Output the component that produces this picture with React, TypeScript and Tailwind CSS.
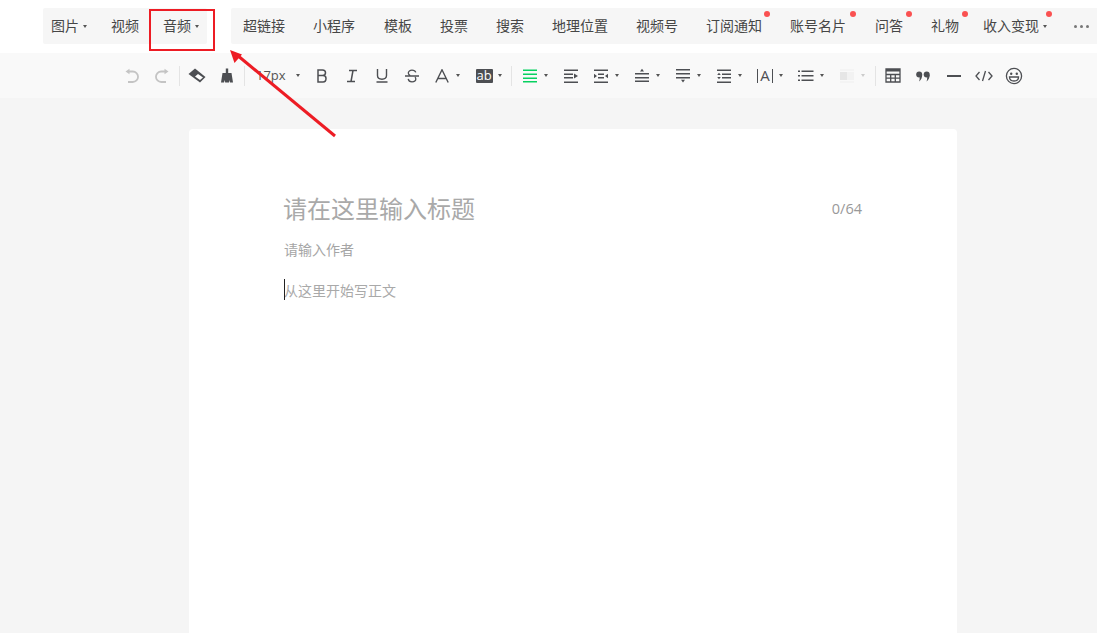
const menuFont = { fontFamily: '"Noto Sans CJK SC", "Liberation Sans", sans-serif' }

function Caret({ className = "border-t-[#555]" }: { className?: string }) {
  return <span className={`inline-block w-0 h-0 border-x-[2.5px] border-x-transparent border-t-[3px] ${className}`} />
}

function MenuItem({ label, caret, dot, className }: { label: string; caret?: boolean; dot?: string; className: string }) {
  return (
    <div className={`relative flex items-center shrink-0 text-[14px] leading-[36px] text-[#464646] ${className}`}>
      <span className="-mt-[2px]">{label}</span>
      {caret && <span className="ml-[4px] flex"><Caret /></span>}
      {dot && <span className={`absolute top-[3px] w-[6px] h-[6px] rounded-full bg-[#fa5151] ${dot}`} />}
    </div>
  )
}

function Tool({ children, caret, disabled, className = "" }: { children: React.ReactNode; caret?: boolean; disabled?: boolean; className?: string }) {
  return (
    <div className={`flex items-center shrink-0 ${caret ? "mr-[5px]" : ""} ${className}`}>
      <div className="w-[30px] h-[24px] flex items-center justify-center">{children}</div>
      {caret && (
        <div className="w-[10px] -ml-[4px] flex justify-center">
          <Caret className={disabled ? "border-t-[#ccc]" : "border-t-[#555]"} />
        </div>
      )}
    </div>
  )
}

function Sep({ className }: { className: string }) {
  return <div className={`w-px h-[20px] bg-[#e4e4e4] shrink-0 ${className}`} />
}

function Icon({ children, w = 18, h = 18 }: { children: React.ReactNode; w?: number; h?: number }) {
  return <svg width={w} height={h} viewBox={`0 0 ${w} ${h}`} fill="none">{children}</svg>
}

const dark = "#4d4f53"

function Lines({ ys, color = dark }: { ys: number[]; color?: string }) {
  return (
    <>
      {ys.map((y) => (
        <rect key={y} x="2" y={y} width="14" height="1.5" fill={color} />
      ))}
    </>
  )
}

export default function App() {
  return (
    <div className="relative w-[1097px] h-[633px] overflow-hidden bg-[#f5f5f5] flex flex-col" style={menuFont}>
      {/* 插入菜单 */}
      <div className="h-[53px] bg-white flex items-start pt-[8px] shrink-0">
        <div className="ml-[43px] h-[36px] w-[164px] bg-[#f6f6f6] rounded-[2px] flex pl-[8px]">
          <MenuItem label="图片" caret className="w-[60px]" />
          <MenuItem label="视频" className="w-[52px]" />
          <MenuItem label="音频" caret className="w-[43px]" />
        </div>
        <div className="ml-[24px] h-[36px] flex-1 bg-[#f6f6f6] rounded-l-[2px] flex pl-[12px] relative">
          <MenuItem label="超链接" className="mr-[28px]" />
          <MenuItem label="小程序" className="mr-[29px]" />
          <MenuItem label="模板" className="mr-[28px]" />
          <MenuItem label="投票" className="mr-[28px]" />
          <MenuItem label="搜索" className="mr-[28px]" />
          <MenuItem label="地理位置" className="mr-[28px]" />
          <MenuItem label="视频号" className="mr-[28px]" />
          <MenuItem label="订阅通知" dot="-right-[8px]" className="mr-[28px]" />
          <MenuItem label="账号名片" dot="-right-[10px]" className="mr-[29px]" />
          <MenuItem label="问答" dot="-right-[9px]" className="mr-[28px]" />
          <MenuItem label="礼物" dot="-right-[9px]" className="mr-[24px]" />
          <MenuItem label="收入变现" caret dot="-right-[5px]" className="" />
          <div className="ml-[27px] flex items-center gap-[3px]">
            <span className="w-[3px] h-[3px] rounded-full bg-[#777]" />
            <span className="w-[3px] h-[3px] rounded-full bg-[#777]" />
            <span className="w-[3px] h-[3px] rounded-full bg-[#777]" />
          </div>
        </div>
      </div>

      {/* 格式工具栏 */}
      <div className="h-[45px] bg-[#f9f9f9] flex items-center pl-[117px] shrink-0">
        <Tool>
          <Icon w={16} h={16}>
            <path d="M1.500 3.500 5.500 .8v5.400z" fill="#c4c4c4" />
            <path d="M5 3.500h3.800a5 5 0 0 1 0 10.500H4" stroke="#c4c4c4" strokeWidth="1.800" />
          </Icon>
        </Tool>
        <Tool>
          <Icon w={16} h={16}>
            <path d="M14.500 3.500 10.500 .8v5.400z" fill="#c4c4c4" />
            <path d="M11 3.500H7.200a5 5 0 0 0 0 10.500H12" stroke="#c4c4c4" strokeWidth="1.800" />
          </Icon>
        </Tool>
        <Sep className="ml-[2px] mr-[2px]" />
        <Tool>
          <Icon w={18} h={15}>
            <path d="M7 .5.500 6 12 14.500 17.500 9z" fill={dark} />
            <path d="M10 6 15 9.500 12 12 7 8.500z" fill="#fff" />
          </Icon>
        </Tool>
        <Tool>
          <Icon w={12} h={15}>
            <path d="M4.800 .5h2.400v4.500h3.300L12 14.500H9l-.6-2.500-.4 2.500H4.200L3.800 12l-.8 2.500H0L1.500 5h3.300z" fill={dark} />
          </Icon>
        </Tool>
        <Sep className="ml-[2px] mr-[5px]" />
        <div className="w-[57px] shrink-0 flex items-center text-[13px] text-[#555] pl-[6px]" style={{ fontFamily: '"Open Sans", sans-serif' }}>
          <span>17px</span>
          <span className="ml-[10px] flex"><Caret /></span>
        </div>
        <Tool>
          <Icon w={12} h={14}>
            <path d="M2 1h4.500c2 0 3 1.200 3 2.800S8.500 6.500 6.500 6.500H2zM2 6.500h5c2 0 3 1.200 3 3s-1 3.500-3 3.500H2z" stroke={dark} strokeWidth="1.500" />
          </Icon>
        </Tool>
        <Tool>
          <Icon w={12} h={14}>
            <path d="M3 1.500h8M1 12.500h8M7 1.500 5 12.500" stroke={dark} strokeWidth="1.500" />
          </Icon>
        </Tool>
        <Tool>
          <Icon w={12} h={15}>
            <path d="M1.500 1v6.500c0 2.500 1.700 3.700 4.500 3.700s4.500-1.200 4.500-3.700V1M.5 14h11" stroke={dark} strokeWidth="1.400" />
          </Icon>
        </Tool>
        <Tool>
          <Icon w={14} h={14}>
            <path d="M10.800 3.400C10.300 2 8.800 1.200 7 1.200 5 1.200 3.300 2.200 3.300 4c0 1.200.7 2 1.900 2.500M0 7h14M3.200 9.800c.3 2 1.800 3 3.800 3s3.800-1 3.800-2.800c0-.8-.3-1.400-.8-1.900" stroke={dark} strokeWidth="1.300" />
          </Icon>
        </Tool>
        <Tool caret>
          <Icon w={14} h={14}>
            <path d="M.8 13.500 7 .8l6.200 12.700M3 9.500h8" stroke={dark} strokeWidth="1.400" />
          </Icon>
        </Tool>
        <Tool caret className="ml-px">
          <div className="w-[17px] h-[14px] bg-[#4d4f53] text-white text-[13px] leading-[13px] text-center rounded-[1px]" style={{ fontFamily: '"Open Sans", sans-serif' }}>ab</div>
        </Tool>
        <Sep className="ml-[1px] mr-[3px]" />
        <Tool caret>
          <Icon w={18} h={14}><Lines ys={[0.5, 4.500, 8.500, 12]} color="#07d160" /></Icon>
        </Tool>
        <Tool>
          <Icon w={18} h={14}>
            <Lines ys={[0.5, 12.500]} />
            <rect x="2" y="4.500" width="9" height="1.500" fill={dark} />
            <rect x="2" y="8" width="9" height="1.500" fill={dark} />
            <path d="M12 4.500 16 7 12 9.500z" fill={dark} />
          </Icon>
        </Tool>
        <Tool caret>
          <Icon w={18} h={14}>
            <Lines ys={[0.5, 12.500]} />
            <rect x="6" y="4.500" width="6" height="1.500" fill={dark} />
            <rect x="6" y="8" width="6" height="1.500" fill={dark} />
            <path d="M2 4.800 5 7 2 9.200zM16 4.800 13 7 16 9.200z" fill={dark} />
          </Icon>
        </Tool>
        <Tool caret>
          <Icon w={18} h={15}>
            <Lines ys={[5, 9, 12.500]} />
            <path d="M9 .8 11 3.500H7z" fill={dark} />
          </Icon>
        </Tool>
        <Tool caret>
          <Icon w={18} h={15}>
            <Lines ys={[1, 5, 9]} />
            <path d="M9 14.500 11 11.800H7z" fill={dark} />
          </Icon>
        </Tool>
        <Tool caret>
          <Icon w={18} h={14}>
            <Lines ys={[0.5, 12.500]} />
            <rect x="7" y="4.500" width="9" height="1.500" fill={dark} />
            <rect x="7" y="8" width="9" height="1.500" fill={dark} />
            <path d="M4 3.800 5.800 6H2.200zM4 10.200 5.800 8H2.200z" fill={dark} />
          </Icon>
        </Tool>
        <Tool caret>
          <div className="flex items-center text-[15px] leading-none text-[#4d4f53]" style={{ fontFamily: '"Open Sans", sans-serif' }}>
            <span className="w-px h-[14px] bg-[#4d4f53]" />
            <span className="mx-[2px]">A</span>
            <span className="w-px h-[14px] bg-[#4d4f53]" />
          </div>
        </Tool>
        <Tool caret>
          <Icon w={16} h={14}>
            <rect x="0" y="1.500" width="2" height="1.500" fill={dark} />
            <rect x="0" y="6" width="2" height="1.500" fill={dark} />
            <rect x="0" y="10.500" width="2" height="1.500" fill={dark} />
            <rect x="3.500" y="1.500" width="12" height="1.500" fill={dark} />
            <rect x="3.500" y="6" width="12" height="1.500" fill={dark} />
            <rect x="3.500" y="10.500" width="12" height="1.500" fill={dark} />
          </Icon>
        </Tool>
        <Tool caret disabled>
          <Icon w={16} h={14}>
            <rect x="1" y="0.500" width="14" height="1" fill="#f0f0f0" />
            <rect x="1" y="12.500" width="14" height="1" fill="#f0f0f0" />
            <rect x="1" y="3" width="7" height="8" fill="#e6e6e6" />
            <rect x="8" y="3" width="7" height="8" fill="#f2f2f2" />
          </Icon>
        </Tool>
        <Sep className="ml-[2px] mr-[2px]" />
        <Tool>
          <Icon w={16} h={15}>
            <path d="M1 1h14v13H1zM1 6.500h14M1 10.200h14M5.700 6.500V14M10.300 6.500V14" stroke={dark} strokeWidth="1.300" />
            <rect x="1" y="1" width="14" height="2.500" fill={dark} />
          </Icon>
        </Tool>
        <Tool>
          <div className="mt-[2px] flex">
            <Icon w={14} h={11}>
              <circle cx="3.200" cy="3.500" r="3" fill={dark} />
              <path d="M6.200 3.800C6.200 6.500 5 9.200 3 10.500c.6-1.400.8-2.700.6-4z" fill={dark} />
              <circle cx="10.700" cy="3.500" r="3" fill={dark} />
              <path d="M13.700 3.800c0 2.700-1.200 5.400-3.200 6.700.6-1.400.8-2.700.6-4z" fill={dark} />
            </Icon>
          </div>
        </Tool>
        <Tool className="ml-px">
          <Icon w={16} h={4}><rect x="1" y="1" width="14" height="2" fill={dark} /></Icon>
        </Tool>
        <Tool>
          <Icon w={18} h={12}>
            <path d="M4.500 2 1 6l3.500 4M13.500 2 17 6l-3.500 4M10.500 1 7.500 11" stroke={dark} strokeWidth="1.300" />
          </Icon>
        </Tool>
        <Tool>
          <Icon w={18} h={18}>
            <circle cx="9" cy="9" r="7.600" stroke={dark} strokeWidth="1.300" />
            <circle cx="6.200" cy="6.800" r="1.200" fill={dark} />
            <circle cx="11.800" cy="6.800" r="1.200" fill={dark} />
            <path d="M4.500 10h9c0 2.400-2 4-4.500 4s-4.500-1.600-4.500-4z" fill="#fff" stroke={dark} strokeWidth="1.300" />
          </Icon>
        </Tool>
      </div>

      {/* 编辑区 */}
      <div className="flex-1 min-h-0 pt-[31px] pl-[189px]">
        <div className="w-[768px] h-full bg-white rounded-t-[4px] pl-[95px] pr-[95px] pt-[61px]">
          <div className="flex items-center justify-between h-[36px]">
            <span className="-ml-px text-[24px] leading-[36px] text-[#a9a9a9]">请在这里输入标题</span>
            <span className="mt-[2px] text-[14.500px] text-[#999]" style={{ fontFamily: '"Open Sans", sans-serif' }}>0/64</span>
          </div>
          <div className="mt-[12px] h-[22px] text-[14px] leading-[22px] text-[#a5a5a5]">请输入作者</div>
          <div className="relative mt-[19px] h-[22px] text-[14px] leading-[22px] text-[#a9a9a9]">
            从这里开始写正文
            <span className="absolute left-0 top-0 w-px h-[21px] bg-[#222]" />
          </div>
        </div>
      </div>

      {/* 红色标注 */}
      <div className="absolute left-[149px] top-[9px] w-[66px] h-[42px] border-2 border-[#ed1c24]" />
      <svg className="absolute left-[220px] top-[40px]" width="125" height="105" viewBox="0 0 125 105" fill="none">
        <path d="M115 96 17 15" stroke="#ed1c24" strokeWidth="3" />
        <path d="M10 10 22 14.500 14.500 23z" fill="#ed1c24" />
      </svg>
    </div>
  )
}
